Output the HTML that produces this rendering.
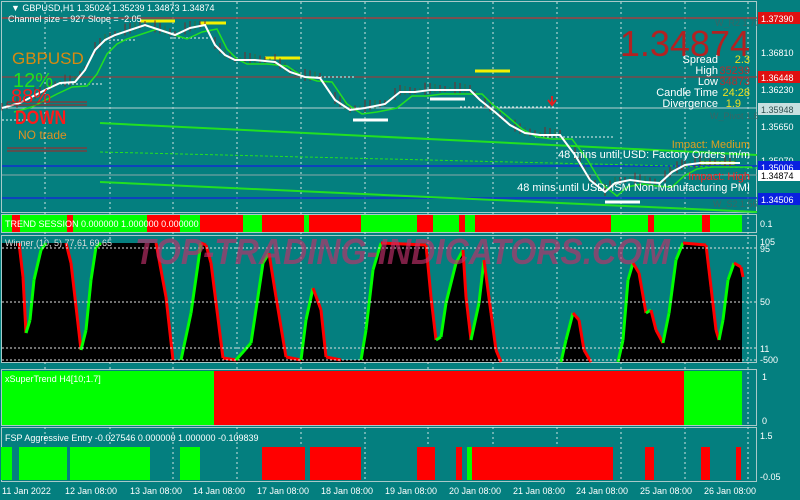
<!DOCTYPE html>
<html><head><meta charset="utf-8">
<style>
html,body{margin:0;padding:0;background:#047f7f;}
body{width:800px;height:500px;overflow:hidden;position:relative;font-family:"Liberation Sans",sans-serif;}
svg{position:absolute;left:0;top:0;}
</style></head><body>
<svg id="s" width="800" height="500" xmlns="http://www.w3.org/2000/svg" font-family="Liberation Sans, sans-serif">
<rect width="800" height="500" fill="#047f7f"/>
<g fill="none" stroke="#a9c9c9" stroke-width="1">
<rect x="1.5" y="1.5" width="755" height="211"/>
<rect x="1.5" y="214.5" width="755" height="18"/>
<rect x="1.5" y="235.5" width="755" height="127"/>
<rect x="1.5" y="369.5" width="755" height="56"/>
<rect x="1.5" y="427.5" width="755" height="54"/>
</g>
<g id="vg" stroke="#cfe3e3" stroke-dasharray="2,3" stroke-width="1"></g>
<line x1="2" y1="18" x2="757" y2="18" stroke="#a04040" stroke-width="1.5"/>
<line x1="2" y1="77" x2="757" y2="77" stroke="#b03030"/>
<line x1="2" y1="108" x2="757" y2="108" stroke="#b8d0d0"/>
<line x1="2" y1="175" x2="757" y2="175" stroke="#8aa8a8"/>
<line x1="2" y1="166" x2="757" y2="166" stroke="#1030d0" stroke-width="1.5"/>
<line x1="2" y1="198" x2="757" y2="198" stroke="#1030d0" stroke-width="1.5"/>
<line x1="100" y1="123" x2="757" y2="155" stroke="#22e022" stroke-width="2"/>
<line x1="100" y1="152" x2="757" y2="168" stroke="#22e022" stroke-dasharray="3,2"/>
<line x1="100" y1="182" x2="757" y2="212" stroke="#22e022" stroke-width="2"/>
<g stroke="#e8f0f0" stroke-dasharray="2,2">
<line x1="2" y1="120" x2="30" y2="120"/><line x1="60" y1="84" x2="102" y2="84"/>
<line x1="105" y1="40" x2="135" y2="40"/><line x1="170" y1="38" x2="210" y2="38"/>
<line x1="300" y1="77" x2="355" y2="77"/><line x1="460" y1="107" x2="555" y2="107"/>
<line x1="535" y1="137" x2="615" y2="137"/>
</g>
<g stroke-width="3">
<line x1="140" y1="21" x2="175" y2="21" stroke="#f4f000"/>
<line x1="200" y1="23" x2="226" y2="23" stroke="#f4f000"/>
<line x1="265" y1="58" x2="300" y2="58" stroke="#f4f000"/>
<line x1="475" y1="71" x2="510" y2="71" stroke="#f4f000"/>
<line x1="700" y1="163" x2="735" y2="163" stroke="#f4f000"/>
<line x1="353" y1="120" x2="388" y2="120" stroke="#fff"/>
<line x1="430" y1="99" x2="465" y2="99" stroke="#fff"/>
<line x1="605" y1="202" x2="640" y2="202" stroke="#fff"/>
</g>
<g id="cd"></g>
<polyline id="gl" fill="none" stroke="#22e022" stroke-width="1.5"/>
<polyline id="wl" fill="none" stroke="#fff" stroke-width="2"/>
<path d="M552 96 v8 M548 100 l4 5 l4 -5" stroke="#e02020" stroke-width="2" fill="none"/>
<text x="12" y="64" font-size="17" fill="#d88a10">GBPUSD</text>
<text x="13" y="87" font-size="20" fill="#20e020">12%</text>
<text x="11" y="103" font-size="20" fill="#ff1a1a">88%</text>
<line x1="7" y1="102" x2="87" y2="102" stroke="#b02020"/><line x1="7" y1="105" x2="87" y2="105" stroke="#b02020"/>
<text x="15" y="124" font-size="19" font-weight="bold" fill="#ff1a1a" transform="translate(15 0) scale(0.85 1) translate(-15 0)">DOWN</text>
<text x="18" y="139" font-size="12" fill="#e09020">NO trade</text>
<line x1="7" y1="148" x2="87" y2="148" stroke="#b02020"/><line x1="7" y1="151" x2="87" y2="151" stroke="#b02020"/>
<text x="11" y="11" font-size="9" fill="#fff">▼ GBPUSD,H1  1.35024 1.35239 1.34873 1.34874</text>
<text x="8" y="22" font-size="9" fill="#fff">Channel size = 927 Slope = -2.05</text>
<text x="750" y="56" font-size="36" fill="#b22222" text-anchor="end">1.34874</text>
<g font-size="11" fill="#fff" text-anchor="end">
<text x="718" y="63">Spread</text><text x="718" y="74">High</text><text x="718" y="85">Low</text>
<text x="718" y="96">Candle Time</text><text x="718" y="107">Divergence</text>
</g>
<g font-size="11" text-anchor="end">
<text x="750" y="63" fill="#f0e020">2.3</text><text x="750" y="74" fill="#b03030">35239</text>
<text x="750" y="85" fill="#b03030">34873</text><text x="750" y="96" fill="#f0e020">24:28</text>
<text x="741" y="107" fill="#f0e020">1.9</text>
</g>
<g font-size="9" fill="#3a6666"><text x="715" y="26">W_R2 1.70</text><text x="710" y="119">W_Pivot 1.6</text><text x="713" y="207">W_S2 1.56</text></g>
<text x="750" y="148" font-size="11" fill="#e0a020" text-anchor="end">Impact: Medium</text>
<text x="750" y="158" font-size="11" fill="#fff" text-anchor="end">48 mins until USD: Factory Orders m/m</text>
<text x="750" y="180" font-size="11" fill="#ff2020" text-anchor="end">Impact: High</text>
<text x="750" y="191" font-size="11" fill="#fff" text-anchor="end">48 mins until USD: ISM Non-Manufacturing PMI</text>
<g font-size="9" fill="#fff">
<rect x="758" y="12" width="42" height="12" fill="#e01010"/><text x="761" y="22">1.37390</text>
<text x="761" y="56">1.36810</text>
<rect x="758" y="71" width="42" height="12" fill="#e01010"/><text x="761" y="81">1.36448</text>
<text x="761" y="93">1.36230</text>
<rect x="758" y="103" width="42" height="12" fill="#c8e0e0"/><text x="761" y="113" fill="#305050">1.35948</text>
<text x="761" y="130">1.35650</text>
<text x="761" y="164">1.35070</text>
<rect x="758" y="161" width="42" height="12" fill="#0a20e0"/><text x="761" y="171">1.35006</text>
<rect x="758" y="170" width="42" height="11" fill="#fff"/><text x="761" y="179" fill="#000">1.34874</text>
<rect x="758" y="193" width="42" height="12" fill="#0a20e0"/><text x="761" y="203">1.34506</text>
<text x="760" y="227">0.1</text>
<text x="760" y="245">105</text><text x="760" y="252">95</text><text x="760" y="305">50</text><text x="760" y="352">11</text><text x="760" y="363">-500</text>
<text x="762" y="380">1</text><text x="762" y="424">0</text><text x="760" y="439">1.5</text><text x="760" y="480">-0.05</text>
</g>
<g id="ts"></g>
<text x="5" y="227" font-size="9" fill="#fff">TREND SESSION 0.000000 1.000000 0.000000</text>
<polygon id="wp" fill="#000"/>
<g id="ws" stroke-width="3" fill="none"></g>
<g stroke="#e0e0e0" stroke-dasharray="2,2"><line x1="2" y1="248" x2="757" y2="248"/><line x1="2" y1="302" x2="757" y2="302"/><line x1="2" y1="348" x2="757" y2="348"/><line x1="2" y1="360" x2="757" y2="360"/></g>
<text x="5" y="246" font-size="9" fill="#ddd">Winner (10, 5)  77.61 69.65</text>
<text x="135" y="264" font-size="36" font-weight="bold" font-style="italic" fill="#c0306a" fill-opacity="0.65" textLength="535" lengthAdjust="spacingAndGlyphs">TOP-TRADING-INDICATORS.COM</text>
<rect x="2" y="371" width="212" height="54" fill="#00ff00"/>
<rect x="214" y="371" width="470" height="54" fill="#ff0000"/>
<rect x="684" y="371" width="58" height="54" fill="#00ff00"/>
<text x="5" y="382" font-size="9" fill="#fff">xSuperTrend H4[10;1.7]</text>
<g id="fsp"></g>
<text x="5" y="441" font-size="9" fill="#fff">FSP Aggressive Entry -0.027546 0.000000 1.000000 -0.109839</text>
<g id="ta" font-size="9" fill="#fff"></g>
</svg>
<script>
var NS="http://www.w3.org/2000/svg";
function el(p,t,a){var e=document.createElementNS(NS,t);for(var k in a)e.setAttribute(k,a[k]);p.appendChild(e);return e;}
var gx=[45,110,173,237,301,365,428,493,557,621,685,748];
var vg=document.getElementById('vg');
gx.forEach(function(x){el(vg,'line',{x1:x,y1:2,x2:x,y2:482});});
var ta=document.getElementById('ta');
var labs=["11 Jan 2022","12 Jan 08:00","13 Jan 08:00","14 Jan 08:00","17 Jan 08:00","18 Jan 08:00","19 Jan 08:00","20 Jan 08:00","21 Jan 08:00","24 Jan 08:00","25 Jan 08:00","26 Jan 08:00"];
var lx=[2,65,130,193,257,321,385,449,513,576,640,704];
labs.forEach(function(l,i){var t=el(ta,'text',{x:lx[i],y:494});t.textContent=l;});
var ts=document.getElementById('ts');
var T=[[2,12,'g'],[12,20,'r'],[20,67,'g'],[67,73,'r'],[73,147,'g'],[147,180,'r'],[180,200,'g'],[200,243,'r'],[243,262,'g'],[262,304,'r'],[304,309,'g'],[309,361,'r'],[361,417,'g'],[417,433,'r'],[433,459,'g'],[459,465,'r'],[465,475,'g'],[475,611,'r'],[611,648,'g'],[648,654,'r'],[654,702,'g'],[702,710,'r'],[710,742,'g']];
T.forEach(function(s){el(ts,'rect',{x:s[0],y:215,width:s[1]-s[0],height:17,fill:s[2]=='g'?'#00ff00':'#ff0000'});});
var F=[[1,12,'g'],[19,67,'g'],[70,150,'g'],[180,200,'g'],[262,305,'r'],[310,361,'r'],[417,435,'r'],[456,462,'r'],[467,472,'g'],[472,613,'r'],[645,654,'r'],[701,710,'r'],[736,741,'r']];
var fsp=document.getElementById('fsp');
F.forEach(function(s){el(fsp,'rect',{x:s[0],y:447,width:s[1]-s[0],height:33,fill:s[2]=='g'?'#00ff00':'#ff0000'});});
var W=[[2,243],[18,243],[22,277],[25,333],[29,320],[33,280],[40,250],[45,243],[65,243],[70,263],[80,350],[85,330],[90,280],[95,247],[100,243],[155,243],[165,297],[172,360],[180,360],[190,313],[200,243],[205,245],[210,263],[222,358],[235,360],[250,343],[262,263],[268,253],[275,297],[285,357],[300,360],[305,320],[312,288],[320,310],[325,357],[340,360],[360,360],[365,330],[372,270],[380,243],[425,245],[430,297],[435,340],[440,337],[445,303],[455,263],[462,250],[465,297],[470,340],[478,303],[483,260],[490,313],[495,350],[500,362],[560,362],[565,340],[572,313],[578,320],[583,350],[590,362],[617,362],[622,340],[627,280],[632,263],[638,273],[645,313],[650,310],[655,330],[662,343],[668,313],[675,260],[682,243],[705,245],[710,287],[715,330],[718,340],[722,320],[727,280],[733,263],[740,267],[742,277]];
var pts=W.map(function(p){return p.join(',')}).join(' ');
document.getElementById('wp').setAttribute('points','2,362 '+pts+' 742,362');
var ws=document.getElementById('ws');
for(var i=1;i<W.length;i++){var a=W[i-1],b=W[i];if(a[1]==b[1])continue;el(ws,'line',{x1:a[0]+1,y1:a[1],x2:b[0]+1,y2:b[1],stroke:b[1]<a[1]?'#00ff00':'#ff0000'});}
var WL=[[2,108],[20,103],[45,90],[60,83],[75,82],[85,70],[95,50],[105,40],[115,35],[130,30],[145,25],[160,30],[175,35],[190,28],[205,25],[215,45],[225,55],[235,60],[255,60],[275,62],[290,72],[305,77],[320,78],[335,100],[350,110],[365,108],[385,104],[400,92],[415,92],[430,90],[470,90],[480,100],[495,112],[510,125],[525,133],[540,135],[560,135],[575,155],[590,180],[605,192],[615,183],[630,180],[645,182],[660,183],[672,172],[685,165],[700,163],[740,163]];
document.getElementById('wl').setAttribute('points',WL.map(function(p){return p.join(',')}).join(' '));
document.getElementById('gl').setAttribute('points',WL.map(function(p){return (p[0]+12)+','+(p[1]+4)}).join(' '));
var cd=document.getElementById('cd');
for(var i=1;i<WL.length;i++){var a=WL[i-1],b=WL[i];for(var x=a[0];x<b[0];x+=5){var y=a[1]+(b[1]-a[1])*(x-a[0])/(b[0]-a[0]);var h=3+((x*7)%6);el(cd,'line',{x1:x,y1:y-h,x2:x,y2:y+h/2,stroke:((x*13)%3)?'#7a2a2a':'#3a6a3a','stroke-width':1});}}
</script>
</body></html>
